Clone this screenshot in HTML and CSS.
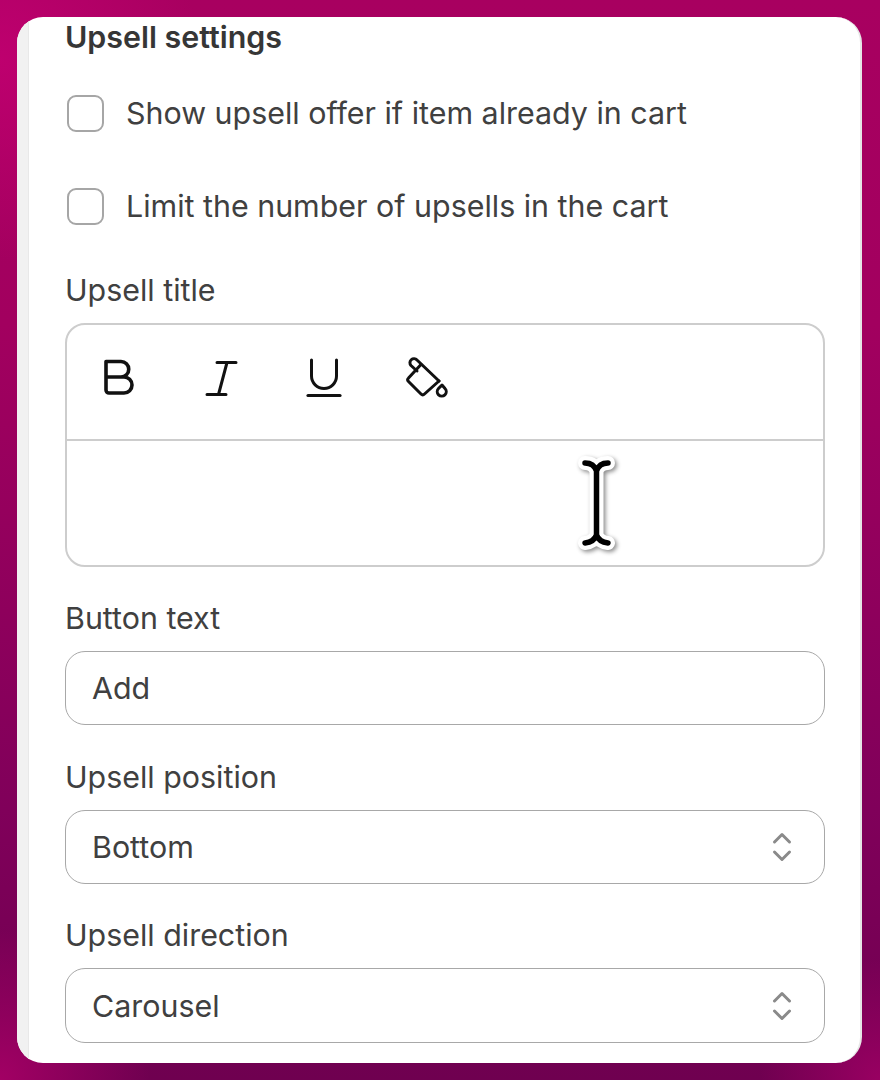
FILE: index.html
```html
<!DOCTYPE html>
<html lang="en">
<head>
    <meta charset="UTF-8">
    <title>Upsell settings</title>
    <link rel="stylesheet" href="styles.css">
</head>
<body>
    <div class="card">
        <div class="card-edge"></div>
        <div class="panel">
            <h2>Upsell settings</h2>

            <label class="check-row first">
                <span class="checkbox"></span>
                <span>Show upsell offer if item already in cart</span>
            </label>
            <label class="check-row second">
                <span class="checkbox"></span>
                <span>Limit the number of upsells in the cart</span>
            </label>

            <!-- Title editor -->
            <div class="field-label title-label">Upsell title</div>
            <div class="editor">
                <div class="toolbar">
                    <svg class="tool tool-b" width="34" height="40" viewBox="0 0 34 40" fill="none" stroke="#111" stroke-width="3.600" stroke-linejoin="round">
                        <path d="M3 3.500h15a7.500 7.500 0 0 1 0 15.500H3zM3 19h18a8 8 0 0 1 0 16H6a3 3 0 0 1-3-3z"/>
                    </svg>
                    <svg class="tool tool-i" width="34" height="40" viewBox="0 0 34 40" fill="none" stroke="#111" stroke-width="3" stroke-linecap="round">
                        <path d="M13 4.500h19M23 4.500l-8.500 32M3 36.500h19"/>
                    </svg>
                    <svg class="tool tool-u" width="36" height="42" viewBox="0 0 36 42" fill="none" stroke="#111" stroke-width="3" stroke-linecap="round">
                        <path d="M5.500 3v16a12.500 12.500 0 0 0 25 0V3"/>
                        <path d="M2 38.500h32" stroke-width="3.200"/>
                    </svg>
                    <svg class="tool tool-fill" width="44" height="42" viewBox="0 0 44 42" fill="none" stroke="#111" stroke-width="3" stroke-linejoin="round" stroke-linecap="round">
                        <path d="M15 7.500L2.500 21a2.500 2.500 0 0 0 0 3.500L15 37a2.500 2.500 0 0 0 3.500 0L33 24"/>
                        <path d="M33 24L11 3a4 4 0 0 0-6 5.500l6 5.500"/>
                        <path d="M36 28l3 3.500a4.500 4.500 0 1 1-6.500 0z"/>
                    </svg>
                </div>
                <div class="editor-body"></div>
            </div>

            <div class="field-label button-label">Button text</div>
            <div class="input">Add</div>

            <div class="field-label position-label">Upsell position</div>
            <div class="input select">
                <span>Bottom</span>
                <svg width="20" height="30" viewBox="0 0 20 30" fill="none" stroke="#8a8a8a" stroke-width="3" stroke-linecap="round" stroke-linejoin="round">
                    <path d="M2.500 10L10 2.500 17.500 10M2.500 20l7.500 7.500 7.500-7.500"/>
                </svg>
            </div>

            <div class="field-label direction-label">Upsell direction</div>
            <div class="input select last">
                <span>Carousel</span>
                <svg width="20" height="30" viewBox="0 0 20 30" fill="none" stroke="#8a8a8a" stroke-width="3" stroke-linecap="round" stroke-linejoin="round">
                    <path d="M2.500 10L10 2.500 17.500 10M2.500 20l7.500 7.500 7.500-7.500"/>
                </svg>
            </div>
        </div>

        <!-- Text cursor over the editor -->
        <svg class="cursor" width="44" height="96" viewBox="0 0 44 96" fill="none" stroke-linecap="round" stroke-linejoin="round">
            <path d="M10 8q9 0 11.500 8v64q-2.500 7-11.500 8M33 8q-9 0-11.500 8M33 88q-9-1-11.500-8" stroke="#fff" stroke-width="14"/>
            <path d="M10 8q9 0 11.500 8v64q-2.500 7-11.500 8M33 8q-9 0-11.500 8M33 88q-9-1-11.500-8" stroke="#000" stroke-width="5.500"/>
        </svg>
    </div>
</body>
</html>
```

FILE: styles.css
```css
* {
    box-sizing: border-box;
}
body {
    margin: 0;
    width: 880px;
    height: 1080px;
    overflow: hidden;
    padding: 17px 18px 17px 17px;
    font-family: 'Inter', sans-serif;
    color: #404040;
    background:
        radial-gradient(circle at 0 60px, rgba(205, 0, 120, 0.6), rgba(205, 0, 120, 0) 200px),
        radial-gradient(circle at 0 1080px, rgba(175, 0, 105, 0.8), rgba(175, 0, 105, 0) 150px),
        radial-gradient(circle at 880px 1080px, rgba(170, 0, 105, 0.7), rgba(170, 0, 105, 0) 120px),
        linear-gradient(180deg, #a80060 0%, #a2005f 30%, #80005a 75%, #6f0050 100%);
}
.card {
    position: relative;
    display: flex;
    height: 1046px;
    background: #fff;
    border-right: 2px solid #e6e6e6;
    border-radius: 26px;
    overflow: hidden;
}
.card-edge {
    width: 12px;
    background: #f1f1f1;
    border-right: 1px solid #e8e8e8;
}
.panel {
    flex: 1;
    padding: 0 35px 0 36px;
}
h2 {
    margin: 0;
    font-size: 30.400px;
    line-height: 40px;
    font-weight: 600;
    color: #363636;
}
.check-row {
    display: flex;
    align-items: center;
    gap: 22px;
    height: 38px;
    font-size: 30.400px;
}
.check-row.first {
    margin-top: 37px;
}
.check-row.second {
    margin-top: 55px;
}
.checkbox {
    width: 37px;
    height: 37px;
    margin-left: 2px;
    border: 2px solid #a6a6a6;
    border-radius: 9px;
    background: #fff;
}
.field-label {
    font-size: 30.400px;
    line-height: 38px;
}
.title-label {
    margin-top: 46px;
}
.button-label {
    margin-top: 32px;
}
.position-label {
    margin-top: 33px;
}
.direction-label {
    margin-top: 32px;
}
.editor {
    margin-top: 14px;
    height: 244px;
    border: 2px solid #cdcdcd;
    border-radius: 20px;
}
.toolbar {
    display: flex;
    align-items: center;
    height: 116px;
    padding: 0 0 9px 36px;
    border-bottom: 2px solid #cdcdcd;
}
.tool-i {
    margin-left: 67px;
}
.tool-u {
    margin-left: 68px;
}
.tool-fill {
    margin-left: 64px;
}
.input {
    display: flex;
    align-items: center;
    justify-content: space-between;
    height: 74px;
    margin-top: 14px;
    padding: 0 32px 0 26px;
    border: 1.500px solid #a8a8a8;
    border-radius: 20px;
    font-size: 30.400px;
}
.input.last {
    height: 75px;
}
.cursor {
    position: absolute;
    left: 558px;
    top: 438px;
    filter: drop-shadow(2px 2px 2px rgba(0, 0, 0, 0.45));
}
```
